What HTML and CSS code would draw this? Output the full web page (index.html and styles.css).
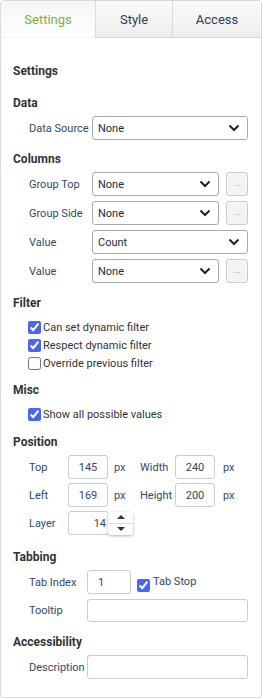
FILE: index.html
```html
<!DOCTYPE html>
<html>
  <head>
    <meta charset="UTF-8">
    <title>Properties</title>
    <link rel="stylesheet" href="styles.css">
  </head>
  <body>
    <div class="panel">
      <div class="tabs">
        <div class="tab active">Settings</div>
        <div class="tab tab-style">Style</div>
        <div class="tab tab-access">Access</div>
      </div>

      <div class="content">
        <h2 class="title">Settings</h2>

        <div class="section sec-data">
          <h3>Data</h3>
          <div class="row">
            <span class="label">Data Source</span>
            <div class="select"><span>None</span><svg class="chev" width="12" height="8" viewBox="0 0 12 8"><path d="M1.5 1.5 L6 6 L10.5 1.5" fill="none" stroke="#222" stroke-width="2"/></svg></div>
          </div>
        </div>

        <div class="section">
          <h3>Columns</h3>
          <div class="rows">
            <div class="row">
              <span class="label">Group Top</span>
              <div class="select"><span>None</span><svg class="chev" width="12" height="8" viewBox="0 0 12 8"><path d="M1.5 1.5 L6 6 L10.5 1.5" fill="none" stroke="#222" stroke-width="2"/></svg></div>
              <div class="more">...</div>
            </div>
            <div class="row">
              <span class="label">Group Side</span>
              <div class="select"><span>None</span><svg class="chev" width="12" height="8" viewBox="0 0 12 8"><path d="M1.5 1.5 L6 6 L10.5 1.5" fill="none" stroke="#222" stroke-width="2"/></svg></div>
              <div class="more">...</div>
            </div>
            <div class="row">
              <span class="label">Value</span>
              <div class="select"><span>Count</span><svg class="chev" width="12" height="8" viewBox="0 0 12 8"><path d="M1.5 1.5 L6 6 L10.5 1.5" fill="none" stroke="#222" stroke-width="2"/></svg></div>
            </div>
            <div class="row">
              <span class="label">Value</span>
              <div class="select"><span>None</span><svg class="chev" width="12" height="8" viewBox="0 0 12 8"><path d="M1.5 1.5 L6 6 L10.5 1.5" fill="none" stroke="#222" stroke-width="2"/></svg></div>
              <div class="more">...</div>
            </div>
          </div>
        </div>

        <div class="section sec-filter">
          <h3>Filter</h3>
          <div class="checks">
            <label class="check"><input type="checkbox" checked> Can set dynamic filter</label>
            <label class="check"><input type="checkbox" checked> Respect dynamic filter</label>
            <label class="check"><input type="checkbox"> Override previous filter</label>
          </div>
        </div>

        <div class="section sec-misc">
          <h3>Misc</h3>
          <div class="checks">
            <label class="check"><input type="checkbox" checked> Show all possible values</label>
          </div>
        </div>

        <div class="section sec-pos">
          <h3>Position</h3>
          <div class="rows">
            <div class="row">
              <span class="pos-label">Top</span>
              <input class="field num" type="text" value="145">
              <span class="unit">px</span>
              <span class="pos-label wide">Width</span>
              <input class="field num" type="text" value="240">
              <span class="unit unit-r">px</span>
            </div>
            <div class="row">
              <span class="pos-label">Left</span>
              <input class="field num" type="text" value="169">
              <span class="unit">px</span>
              <span class="pos-label wide">Height</span>
              <input class="field num" type="text" value="200">
              <span class="unit unit-r">px</span>
            </div>
            <div class="row">
              <span class="pos-label">Layer</span>
              <input class="field layer" type="text" value="14">
              <div class="spin">
                <span class="spin-up"></span>
                <span class="spin-dn"></span>
              </div>
            </div>
          </div>
        </div>

        <div class="section">
          <h3>Tabbing</h3>
          <div class="rows rows-wide">
            <div class="row">
              <span class="label short">Tab Index</span>
              <input class="field tabindex" type="text" value="1">
              <input class="tabstop" type="checkbox" checked>
              <span class="tabstop-text">Tab Stop</span>
            </div>
            <div class="row">
              <span class="label short">Tooltip</span>
              <input class="field grow" type="text" value="">
            </div>
          </div>
        </div>

        <div class="section">
          <h3>Accessibility</h3>
          <div class="row">
            <span class="label short">Description</span>
            <input class="field grow" type="text" value="">
          </div>
        </div>
      </div>
    </div>
  </body>
</html>
```

FILE: styles.css
```css
body {
  margin: 0;
  font-family: Roboto, 'Liberation Sans', sans-serif;
  font-size: 11px;
  color: #333;
}
.panel {
  width: 262px;
  height: 698px;
  box-sizing: border-box;
  border: 1px solid #d9d9d9;
  border-radius: 4px;
  overflow: hidden;
  background: #fff;
}

/* tabs */
.tabs {
  display: flex;
  height: 37px;
}
.tab {
  display: flex;
  align-items: center;
  justify-content: center;
  box-sizing: border-box;
  font-size: 13px;
  color: #2c3e50;
  background: linear-gradient(#fbfbfb, #ededed);
  border-bottom: 1px solid #d9d9d9;
}
.tab.active {
  width: 94px;
  color: #7cb342;
  background: linear-gradient(#f5f5f5, #fff);
  border-bottom-color: transparent;
}
.tab-style {
  width: 77px;
  border-left: 1px solid #d9d9d9;
}
.tab-access {
  flex: 1;
  border-left: 1px solid #d9d9d9;
}

/* body */
.content {
  padding: 25px 13px 0 12px;
}
h2, h3 {
  margin: 0;
  font-size: 12px;
  line-height: 16px;
  font-weight: bold;
  color: #333;
}
h2.title {
  margin-bottom: 16px;
}
h3 {
  margin-bottom: 5px;
}
.section {
  margin-bottom: 12px;
}
.sec-data { margin-bottom: 11px; }
.sec-filter { margin-bottom: 10px; }
.sec-misc { margin-bottom: 11px; }
.sec-pos { margin-bottom: 14px; }

.rows {
  display: flex;
  flex-direction: column;
  gap: 5px;
}
.sec-pos .rows { gap: 4px; }
.row {
  display: flex;
  align-items: center;
  height: 24px;
  margin-left: 16px;
  color: #34495e;
}
.label {
  width: 63px;
  flex: none;
  white-space: nowrap;
}
.label.short { width: 58px; }

.select {
  flex: 1;
  height: 24px;
  box-sizing: border-box;
  display: flex;
  align-items: center;
  justify-content: space-between;
  padding: 0 7px 0 5px;
  border: 1px solid #aaa;
  border-radius: 3px;
  color: #1d2b3a;
}
.more {
  flex: none;
  width: 22px;
  height: 24px;
  box-sizing: border-box;
  margin-left: 7px;
  padding-bottom: 3px;
  border: 1px solid #ccc;
  border-radius: 3px;
  background: #f4f4f4;
  color: #888;
  font-size: 9px;
  display: flex;
  align-items: center;
  justify-content: center;
}

/* checkboxes */
.checks {
  padding-top: 2px;
}
.check {
  display: flex;
  align-items: center;
  height: 18px;
  padding-left: 15px;
  color: #333;
}
.check input,
.tabstop {
  width: 13px;
  height: 13px;
  margin: 0 2px 0 0;
  accent-color: #4b65f2;
}

/* inputs */
.field {
  height: 24px;
  box-sizing: border-box;
  border: 1px solid #ccc;
  border-radius: 3px;
  font-family: inherit;
  font-size: 11px;
  color: #34495e;
  padding: 0 4px;
  outline: none;
}
.field.num {
  width: 40px;
  text-align: center;
}
.pos-label {
  width: 39px;
  flex: none;
}
.pos-label.wide { width: 35px; }
.unit {
  width: 32px;
  flex: none;
  box-sizing: border-box;
  padding-left: 6px;
}
.unit-r { padding-left: 8px; }

.field.layer {
  width: 41px;
  text-align: right;
  padding-right: 2px;
}
.spin {
  width: 25px;
  height: 23px;
  margin-left: -1px;
  display: flex;
  flex-direction: column;
  background: #fff;
  border-radius: 3px;
  box-shadow: 0 1px 3px rgba(0, 0, 0, 0.3);
}
.spin-up,
.spin-dn {
  flex: 1;
  display: flex;
  align-items: center;
  justify-content: center;
}
.spin-up { border-bottom: 1px solid #ddd; }
.spin-up::before {
  content: '';
  border-left: 4px solid transparent;
  border-right: 4px solid transparent;
  border-bottom: 4px solid #333;
}
.spin-dn::before {
  content: '';
  border-left: 4px solid transparent;
  border-right: 4px solid transparent;
  border-top: 4px solid #333;
}

.field.tabindex {
  width: 44px;
  padding-left: 10px;
}
.tabstop {
  align-self: flex-end;
  margin: 0 3px 2px 6px;
}
.tabstop-text {
  color: #34495e;
  margin-bottom: 1px;
}
.field.grow {
  flex: 1;
  width: 0;
  min-width: 0;
}
.rows-wide .row:last-child {
  height: 23px;
}
.rows-wide .row:last-child .field { height: 23px; }
```
